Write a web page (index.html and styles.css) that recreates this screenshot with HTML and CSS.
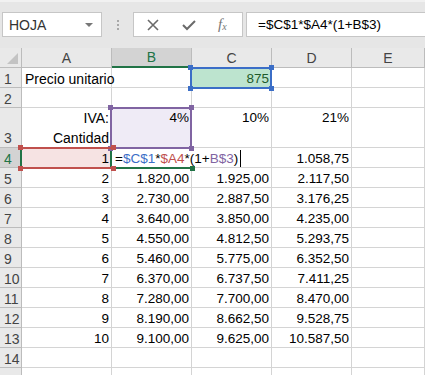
FILE: index.html
```html
<!DOCTYPE html>
<html lang="es">

<head>
	<meta charset="UTF-8">
	<title>Hoja - IVA</title>
	<link rel="stylesheet" href="styles.css">
</head>

<body>
	<div class="window">
		<header class="toolbar">
			<div class="name-box">
				<span>HOJA</span>
				<span class="caret"></span>
			</div>
			<div class="grip"><i></i><i></i><i></i></div>
			<div class="buttons">
				<svg class="icon" width="14" height="14" viewBox="0 0 14 14">
					<path d="M2 2 L12 12 M12 2 L2 12" stroke="#6a6a6a" stroke-width="1.6" fill="none" />
				</svg>
				<svg class="icon" width="16" height="14" viewBox="0 0 16 14">
					<path d="M2 7 L6 11 L14 3" stroke="#6a6a6a" stroke-width="2" fill="none" />
				</svg>
				<span class="fx">f<sub>x</sub></span>
			</div>
			<div class="formula-input">=$C$1*$A4*(1+B$3)</div>
		</header>

		<div class="sheet">
			<!-- header row -->
			<div class="corner"><span class="corner-mark"></span></div>
			<div class="col-head">A</div>
			<div class="col-head selected">B</div>
			<div class="col-head">C</div>
			<div class="col-head">D</div>
			<div class="col-head">E</div>

			<!-- 1 -->
			<div class="row-head">1</div>
			<div class="cell left label">Precio unitario</div>
			<div class="cell"></div>
			<div class="cell num good">875<span class="ref blue"><b class="tl"></b><b class="tr"></b><b class="bl"></b><b class="br"></b></span></div>
			<div class="cell"></div>
			<div class="cell"></div>

			<!-- 2 -->
			<div class="row-head">2</div>
			<div class="cell"></div>
			<div class="cell"></div>
			<div class="cell"></div>
			<div class="cell"></div>
			<div class="cell"></div>

			<!-- 3 -->
			<div class="row-head tall">3</div>
			<div class="cell num wrap label">IVA:<br>Cantidad</div>
			<div class="cell num top lilac">4%<span class="ref purple"><b class="tl"></b><b class="tr"></b><b class="bl"></b><b class="br"></b></span></div>
			<div class="cell num top">10%</div>
			<div class="cell num top">21%</div>
			<div class="cell"></div>

			<!-- 4 -->
			<div class="row-head selected">4</div>
			<div class="cell num pink">1<span class="ref red"><b class="tl"></b><b class="tr"></b><b class="bl"></b><b class="br"></b></span></div>
			<div class="cell editing">
				<span>=</span><span class="c-blue">$C$1</span><span>*</span><span class="c-red">$A4</span><span>*(1+</span><span class="c-purple">B$3</span><span>)</span><span class="cursor"></span>
				<span class="active"><b class="br"></b></span>
			</div>
			<div class="cell"></div>
			<div class="cell num">1.058,75</div>
			<div class="cell"></div>

			<div class="row-head">5</div>
			<div class="cell num">2</div>
			<div class="cell num">1.820,00</div>
			<div class="cell num">1.925,00</div>
			<div class="cell num">2.117,50</div>
			<div class="cell"></div>

			<div class="row-head">6</div>
			<div class="cell num">3</div>
			<div class="cell num">2.730,00</div>
			<div class="cell num">2.887,50</div>
			<div class="cell num">3.176,25</div>
			<div class="cell"></div>

			<div class="row-head">7</div>
			<div class="cell num">4</div>
			<div class="cell num">3.640,00</div>
			<div class="cell num">3.850,00</div>
			<div class="cell num">4.235,00</div>
			<div class="cell"></div>

			<div class="row-head">8</div>
			<div class="cell num">5</div>
			<div class="cell num">4.550,00</div>
			<div class="cell num">4.812,50</div>
			<div class="cell num">5.293,75</div>
			<div class="cell"></div>

			<div class="row-head">9</div>
			<div class="cell num">6</div>
			<div class="cell num">5.460,00</div>
			<div class="cell num">5.775,00</div>
			<div class="cell num">6.352,50</div>
			<div class="cell"></div>

			<div class="row-head">10</div>
			<div class="cell num">7</div>
			<div class="cell num">6.370,00</div>
			<div class="cell num">6.737,50</div>
			<div class="cell num">7.411,25</div>
			<div class="cell"></div>

			<div class="row-head">11</div>
			<div class="cell num">8</div>
			<div class="cell num">7.280,00</div>
			<div class="cell num">7.700,00</div>
			<div class="cell num">8.470,00</div>
			<div class="cell"></div>

			<div class="row-head">12</div>
			<div class="cell num">9</div>
			<div class="cell num">8.190,00</div>
			<div class="cell num">8.662,50</div>
			<div class="cell num">9.528,75</div>
			<div class="cell"></div>

			<div class="row-head">13</div>
			<div class="cell num">10</div>
			<div class="cell num">9.100,00</div>
			<div class="cell num">9.625,00</div>
			<div class="cell num">10.587,50</div>
			<div class="cell"></div>

			<div class="row-head">14</div>
			<div class="cell"></div>
			<div class="cell"></div>
			<div class="cell"></div>
			<div class="cell"></div>
			<div class="cell"></div>

			<div class="row-head"></div>
			<div class="cell"></div>
			<div class="cell"></div>
			<div class="cell"></div>
			<div class="cell"></div>
			<div class="cell"></div>
		</div>
	</div>
</body>

</html>
```

FILE: styles.css
```css
*,
*::before,
*::after {
	margin: 0;
	padding: 0;
	box-sizing: border-box;

	--bar-color: #e6e6e6;
	--head-color: #e9e9e9;
	--head-selected: #d3d3d3;
	--grid-line: #d4d4d4;
	--head-line: #bcbcbc;
	--green: #217346;
	--blue: #3b6ec7;
	--red: #c0504d;
	--purple: #8064a2;
}

body {
	width: 425px;
	height: 375px;
	overflow: hidden;
	background-color: #fff;
	font-family: "Liberation Sans", Arial, sans-serif;
	font-size: 13.5px;
	color: #000;
}

.window {
	display: flex;
	flex-direction: column;
}

/* top bar */

.toolbar {
	height: 48px;
	padding: 12px 0 0 2px;

	display: flex;
	align-items: flex-start;

	background-color: var(--bar-color);
	border-top: 2px solid #f1f1f1;
}

.name-box {
	width: 100px;
	height: 25px;
	margin-top: -2px;
	padding: 0 8px 0 6px;

	display: flex;
	align-items: center;
	justify-content: space-between;

	background-color: #fff;
	border: 1px solid #c6c6c6;
	color: #333;
	font-size: 14px;
}

.caret {
	width: 0;
	height: 0;
	border-left: 4px solid transparent;
	border-right: 4px solid transparent;
	border-top: 4px solid #777;
}

.grip {
	width: 31px;
	height: 25px;
	margin-top: -2px;

	display: flex;
	flex-direction: column;
	align-items: center;
	justify-content: center;
	gap: 2px;
}

.grip i {
	width: 2px;
	height: 2px;
	background-color: #a8a8a8;
}

.buttons {
	width: 110px;
	height: 25px;
	margin-top: -2px;
	padding-left: 12px;

	display: flex;
	align-items: center;
	gap: 21px;

	background-color: #fff;
	border: 1px solid #c6c6c6;
}

.fx {
	font-family: "Liberation Serif", serif;
	font-style: italic;
	font-size: 15px;
	color: #777;
}

.fx sub {
	font-size: 10px;
	vertical-align: -1px;
}

.formula-input {
	flex: 1;
	height: 25px;
	margin: -2px -2px 0 3px;
	padding: 0 0 0 11px;

	display: flex;
	align-items: center;

	background-color: #fff;
	border: 1px solid #c6c6c6;
	font-size: 13.5px;
}

/* sheet */

.sheet {
	display: grid;
	grid-template-columns: 22px 90px 80px 80px 80px 1fr;
	grid-template-rows: 20px 20px 20px 40px;
	grid-auto-rows: 20px;
}

.corner {
	position: relative;
	background-color: var(--head-color);
	border-right: 1px solid var(--head-line);
	border-bottom: 1px solid var(--head-line);
}

.corner-mark {
	position: absolute;
	right: 3px;
	bottom: 3px;
	width: 0;
	height: 0;
	border-left: 11px solid transparent;
	border-bottom: 11px solid #c3c3c3;
}

.col-head,
.row-head {
	display: flex;
	align-items: center;
	justify-content: center;

	background-color: var(--head-color);
	border-right: 1px solid var(--head-line);
	border-bottom: 1px solid var(--head-line);
	color: #444;
	font-size: 14px;
}

.col-head.selected {
	background-color: var(--head-selected);
	border-bottom: 2px solid var(--green);
	color: var(--green);
}

.row-head {
	justify-content: flex-start;
	padding: 2px 0 0 4px;
}

.row-head.tall {
	align-items: flex-end;
	padding-bottom: 1px;
}

.row-head.selected {
	background-color: var(--head-selected);
	border-right: 2px solid var(--green);
	color: var(--green);
}

.cell {
	position: relative;
	padding: 2px 3px 0;
	line-height: 18px;
	white-space: nowrap;

	border-right: 1px solid var(--grid-line);
	border-bottom: 1px solid var(--grid-line);
}

.cell.label {
	font-size: 14px;
}

.cell.num {
	text-align: right;
	padding-right: 2px;
}

.cell.wrap {
	line-height: 20px;
	padding-top: 0;
}

.cell.top {
	padding-top: 1px;
}

.good {
	background-color: #bde4cf;
	color: #1e5a2a;
}

.lilac {
	background-color: #efebf6;
}

.pink {
	background-color: #f6e3e3;
}

/* formula reference boxes */

.ref {
	position: absolute;
	inset: -1px -1px -2px -2px;
	z-index: 2;
	border: 2px solid;
}

.ref b {
	position: absolute;
	width: 5px;
	height: 5px;
}

.ref .tl { left: -4px; top: -4px; }
.ref .tr { right: -4px; top: -4px; }
.ref .bl { left: -4px; bottom: -4px; }
.ref .br { right: -4px; bottom: -4px; }

.ref.blue { border-color: var(--blue); }
.ref.blue b { background-color: var(--blue); }

.ref.purple { border-color: var(--purple); }
.ref.purple b { background-color: var(--purple); }

.ref.red {
	border-color: var(--red);
	border-left: none;
	border-right: none;
	left: 0;
}
.ref.red b { background-color: var(--red); }

.editing {
	z-index: 1;
	border-right: none;
	padding-left: 3px;
}

.c-blue { color: var(--blue); }
.c-red { color: var(--red); }
.c-purple { color: var(--purple); }

.cursor {
	display: inline-block;
	width: 1px;
	height: 17px;
	margin-left: 2px;
	vertical-align: -4px;
	background-color: #000;
}

.active {
	position: absolute;
	left: -2px;
	right: 0;
	top: -1px;
	bottom: -2px;
	border-left: 2px solid var(--green);
	border-bottom: 2px solid var(--green);
}

.active .br {
	position: absolute;
	right: -3px;
	bottom: -4px;
	width: 5px;
	height: 5px;
	background-color: var(--green);
}
```
